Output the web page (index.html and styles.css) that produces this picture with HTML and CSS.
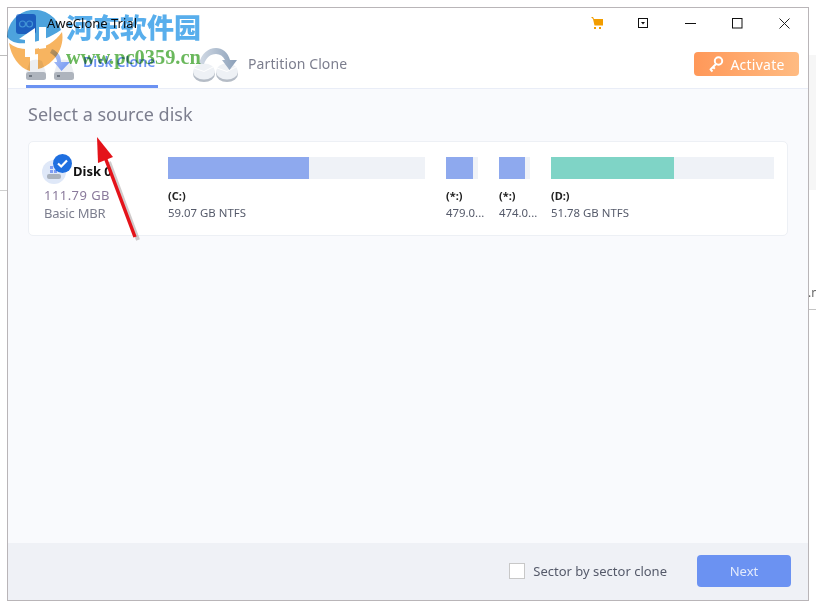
FILE: index.html
```html
<!DOCTYPE html>
<html lang="en">
<head>
<meta charset="utf-8">
<title>AweClone Trial</title>
<link rel="stylesheet" href="styles.css">
</head>
<body>
<div class="desk-band"></div>
<div class="desk-line-a"></div>
<div class="desk-line-b"></div>
<div class="desk-line-c"></div>
<div class="desk-text">.n</div>

<div class="window">
  <header class="head">
    <div class="titlebar">
      <svg class="app-icon" width="20" height="20" viewBox="0 0 20 20"><rect width="20" height="20" rx="3" fill="#5a93dc"/><circle cx="6.500" cy="10" r="3" fill="none" stroke="#dce8f7" stroke-width="1.200"/><circle cx="13.500" cy="10" r="3" fill="none" stroke="#dce8f7" stroke-width="1.200"/></svg>
      <span class="app-title">AweClone Trial</span>
      <div class="controls">
        <span class="ctl"><svg width="14" height="14" viewBox="0 0 14 14"><path d="M1 1h2l1 2h9v6.500H4.500L3 3z" fill="#f29d00"/><rect x="4" y="11" width="2" height="2" fill="#f29d00"/><rect x="9" y="11" width="2" height="2" fill="#f29d00"/></svg></span>
        <span class="ctl"><svg width="11" height="11" viewBox="0 0 11 11"><rect x=".5" y=".5" width="9" height="9" fill="none" stroke="#111"/><path d="M3 4h4L5 6.500z" fill="#111"/></svg></span>
        <span class="ctl"><svg width="11" height="11" viewBox="0 0 11 11"><path d="M0 5.500h11" stroke="#111" fill="none"/></svg></span>
        <span class="ctl"><svg width="11" height="11" viewBox="0 0 11 11"><rect x=".5" y=".5" width="9.500" height="9.500" fill="none" stroke="#111"/></svg></span>
        <span class="ctl"><svg width="11" height="11" viewBox="0 0 11 11"><path d="M.5.500l10 10M10.500.500l-10 10" stroke="#222" fill="none"/></svg></span>
      </div>
    </div>
    <div class="tabbar">
      <div class="tab tab-on">
        <svg class="tab-icon" width="50" height="36" viewBox="0 0 50 36">
          <defs><linearGradient id="arrowFill" x1="0" y1="0" x2="1" y2="1"><stop offset="0" stop-color="#c3d1f7"/><stop offset="1" stop-color="#6b92f2"/></linearGradient></defs>
          <path d="M4 16q6-3 12 0l4 12H0z" fill="#eceef2"/><rect x="0" y="27" width="20" height="8" rx="2.500" fill="#aeb4bd"/><rect x="3" y="30" width="3" height="2" fill="#6f7782"/>
          <path d="M32 16q6-3 12 0l4 12H28z" fill="#eceef2"/><rect x="28" y="27" width="20" height="8" rx="2.500" fill="#aeb4bd"/><rect x="31" y="30" width="3" height="2" fill="#6f7782"/>
          <path d="M26 4c5 2 9 6 9 13h9l-8.500 9L28 17h3c0-4-3-7-7-9z" fill="url(#arrowFill)"/>
        </svg>
        <span class="tab-label">Disk Clone</span>
      </div>
      <div class="tab">
        <svg class="tab-icon-b" width="48" height="36" viewBox="0 0 48 36">
          <defs><linearGradient id="arcFill" x1="0" y1="0" x2="1" y2="0"><stop offset="0" stop-color="#d3dbe6"/><stop offset="1" stop-color="#8a9fb8"/></linearGradient></defs>
          <ellipse cx="11" cy="27" rx="11" ry="8" fill="#b5bcc6"/><ellipse cx="11" cy="24.500" rx="11" ry="8" fill="#eef1f5"/><path d="M11 24.500L1 21M11 24.500L20 20" stroke="#fff" fill="none"/>
          <ellipse cx="34" cy="27" rx="11" ry="8" fill="#b5bcc6"/><ellipse cx="34" cy="24.500" rx="11" ry="8" fill="#eef1f5"/><path d="M34 24.500L24 21M34 24.500L43 20" stroke="#fff" fill="none"/>
          <path d="M6 17C8 7 15 1 23 1c6 0 12 4 14 12h7l-7.500 10L29 13h3c-2-4-5-6-9-6-6 0-10 4-12 10z" fill="url(#arcFill)"/>
        </svg>
        <span class="tab-label">Partition Clone</span>
      </div>
      <button class="activate" type="button">
        <svg width="16" height="18" viewBox="0 0 16 18"><circle cx="10.500" cy="6" r="3.700" fill="none" stroke="#fff" stroke-width="2"/><path d="M8 9L2 15M2.500 14.500l2 2M5 12l1.800 1.800" stroke="#fff" stroke-width="2" fill="none"/></svg>
        <span>Activate</span>
      </button>
    </div>
  </header>

  <main class="main">
    <h1 class="heading">Select a source disk</h1>
    <section class="card">
      <div class="disk-info">
        <div class="disk-name-row">
          <span class="disk-icon">
            <svg width="24" height="24" viewBox="0 0 24 24"><circle cx="12" cy="12" r="12" fill="#dfe8f8"/><rect x="5" y="14" width="14" height="5" rx="2" fill="#aab2bd"/><rect x="8" y="6" width="3" height="3" fill="#7f9df2"/><rect x="8" y="10" width="3" height="3" fill="#7f9df2"/><rect x="12" y="10" width="3" height="3" fill="#7f9df2"/></svg>
            <svg class="disk-check" width="19" height="19" viewBox="0 0 19 19"><circle cx="9.500" cy="9.500" r="9.500" fill="#1f6fe0"/><path d="M5 9.500l3.200 3L14 6.500" fill="none" stroke="#fff" stroke-width="2.200"/></svg>
          </span>
          <span class="disk-name">Disk 0</span>
        </div>
        <div class="disk-size">111.79 GB</div>
        <div class="disk-type">Basic MBR</div>
      </div>
      <div class="parts">
        <div class="part part-c">
          <div class="bar"><div class="fill" style="width:54.900%"></div></div>
          <div class="part-letter">(C:)</div>
          <div class="part-size">59.07 GB NTFS</div>
        </div>
        <div class="part part-s">
          <div class="bar"><div class="fill" style="width:84%"></div></div>
          <div class="part-letter">(*:)</div>
          <div class="part-size">479.0...</div>
        </div>
        <div class="part part-t">
          <div class="bar"><div class="fill" style="width:84%"></div></div>
          <div class="part-letter">(*:)</div>
          <div class="part-size">474.0...</div>
        </div>
        <div class="part part-d">
          <div class="bar"><div class="fill fill-d" style="width:55.200%"></div></div>
          <div class="part-letter">(D:)</div>
          <div class="part-size">51.78 GB NTFS</div>
        </div>
      </div>
    </section>
  </main>

  <footer class="foot">
    <label class="sector"><span class="box"></span><span>Sector by sector clone</span></label>
    <button class="next" type="button">Next</button>
  </footer>
</div>

<svg class="wm-logo" width="60" height="62" viewBox="0 0 60 62">
  <path d="M2 27A27.500 27.500 0 0 1 56 20C46 27 34 32 22 33 14 34 7 33 2 27z" fill="#4da3dd"/>
  <path d="M4 33c6 5 14 7 24 6 12-1 22-7 29-17 2 10-2 21-9 28-5 5-10 8-15 9V44l-8 1v16C14 58 6 46 4 33z" fill="#f6a744" opacity=".85"/>
</svg>
<svg class="wm-house" width="34" height="30" viewBox="0 0 34 30"><path d="M0 12L16 1v29H6V13z" fill="#fff"/><path d="M20 0h7v21l-7 1z" fill="#fff"/></svg>
<div class="wm-cn">河东软件园</div>
<div class="wm-url">www.pc0359.cn</div>
<svg class="red-arrow" width="50" height="106" viewBox="0 0 50 106"><path d="M44 103L15 25" stroke="#7a6a6a" stroke-opacity=".35" stroke-width="4" fill="none" transform="translate(2 2)"/><path d="M43 102L13 22" stroke="#e4131a" stroke-width="3.500" fill="none"/><path d="M5 2L21 22 6 28z" fill="#e4131a"/></svg>
</body>
</html>
```
FILE: styles.css
```css
* { box-sizing: border-box; }
html, body { margin: 0; height: 100%; }
body {
  width: 816px;
  height: 608px;
  overflow: hidden;
  position: relative;
  background: #fff;
  font-family: "Noto Sans", "Open Sans", sans-serif;
}
.desk-band { position: absolute; left: 809px; top: 55px; width: 7px; height: 135px; background: #f6f6f6; }
.desk-line-a { position: absolute; left: 0; top: 55px; width: 7px; height: 1px; background: #bdbdbd; }
.desk-line-b { position: absolute; left: 0; top: 190px; width: 7px; height: 1px; background: #cfcfcf; }
.desk-line-c { position: absolute; left: 809px; top: 309px; width: 7px; height: 1px; background: #c4c4c4; }
.desk-text { position: absolute; left: 808px; top: 284px; font-size: 12px; color: #666; }

.window {
  position: absolute;
  left: 7px;
  top: 7px;
  width: 802px;
  height: 594px;
  border: 1px solid #b9b5b8;
  display: flex;
  flex-direction: column;
  background: #f9fafd;
}
.head { background: #fff; border-bottom: 1px solid #e9edf7; height: 81px; flex: none; }
.titlebar { height: 30px; display: flex; align-items: center; padding-left: 8px; }
.app-icon { margin-top: 2px; }
.app-title { margin-left: 11px; font-size: 13px; color: #111; }
.controls { margin-left: auto; display: flex; align-items: center; }
.ctl { width: 47px; height: 20px; display: flex; align-items: center; justify-content: center; }
.tabbar { height: 50px; display: flex; align-items: stretch; padding-left: 18px; padding-right: 9px; }
.tab { display: flex; align-items: center; gap: 7px; color: #7c7e8e; font-size: 14px; position: relative; height: 50px; }
.tab-on { width: 132px; color: #6b92f2; font-weight: 600; border-bottom: 3px solid #6b92f2; }
.tab-on .tab-label { white-space: nowrap; }
.tab-icon { flex: none; align-self: flex-start; margin-top: 7px; }
.tab-icon-b { margin-left: 35px; flex: none; align-self: flex-start; margin-top: 9px; }
.tab-label { white-space: nowrap; letter-spacing: .1px; }
.activate {
  margin-left: auto;
  margin-top: 14px;
  width: 105px;
  height: 24px;
  border: 0;
  border-radius: 4px;
  background: linear-gradient(90deg, #ff9859, #ffbb82);
  color: #fff;
  display: flex;
  align-items: center;
  justify-content: center;
  gap: 6px;
  font: 14px "Noto Sans", sans-serif;
  letter-spacing: .25px;
  padding: 0;
}
.main { flex: 1; padding: 12px 20px 0; }
.heading { margin: 0; font-size: 18px; font-weight: 400; line-height: 26px; color: #7c7e8e; }
.card {
  margin-top: 14px;
  height: 95px;
  background: #fff;
  border: 1px solid #edf0f5;
  border-radius: 5px;
  display: flex;
  padding: 15px 13px 0 15px;
}
.disk-info { width: 124px; flex: none; }
.disk-name-row { display: flex; align-items: center; height: 28px; }
.disk-icon { position: relative; width: 24px; height: 24px; margin-left: -2px; margin-top: 2px; }
.disk-check { position: absolute; left: 11px; top: -6px; }
.disk-name { margin-left: 7px; font-size: 13px; font-weight: 700; color: #111; }
.disk-size { font-size: 13px; line-height: 18px; letter-spacing: .45px; color: #8a7a9c; margin-top: 1px; }
.disk-type { font-size: 13px; line-height: 18px; letter-spacing: -.2px; color: #7c7e8e; }
.parts { display: flex; flex: 1; gap: 21px; }
.part { flex: none; }
.part-c { width: 257px; }
.part-s { width: 32px; }
.part-t { width: 31px; }
.part-d { width: 223px; }
.bar { height: 22px; background: #eff2f7; }
.fill { height: 22px; background: #8ea9ee; }
.fill-d { background: #7fd4c6; }
.part-letter { margin-top: 9px; font-size: 11px; line-height: 16px; font-weight: 700; color: #222; }
.part-size { margin-top: 1px; font-size: 11.400px; line-height: 16px; color: #555a6a; white-space: nowrap; }
.foot {
  height: 57px;
  flex: none;
  background: #eff1f6;
  display: flex;
  align-items: center;
  padding: 0 17px 2px 0;
  justify-content: flex-end;
}
.sector { display: flex; align-items: center; gap: 8px; font-size: 13px; color: #555a6a; margin-right: 30px; }
.box { width: 16px; height: 16px; background: #fff; border: 1px solid #c8c8c8; }
.next { width: 94px; height: 32px; border: 0; border-radius: 4px; background: #6b92f2; color: #e2eafc; font: 13px "Noto Sans", sans-serif; padding: 0; }

.wm-logo { position: absolute; left: 5px; top: 10px; mix-blend-mode: multiply; }
.wm-house { position: absolute; left: 19px; top: 27px; }
.wm-cn {
  position: absolute;
  left: 66px;
  top: 9px;
  font: 900 27px/36px "Noto Sans CJK SC", sans-serif;
  color: #58aeec;
  white-space: nowrap;
  mix-blend-mode: multiply;
}
.wm-url {
  position: absolute;
  left: 66px;
  top: 47px;
  font: 700 20.400px/20px "Liberation Serif", serif;
  color: #6ab85c;
  white-space: nowrap;
  mix-blend-mode: multiply;
}
.red-arrow { position: absolute; left: 92px; top: 135px; }
```
